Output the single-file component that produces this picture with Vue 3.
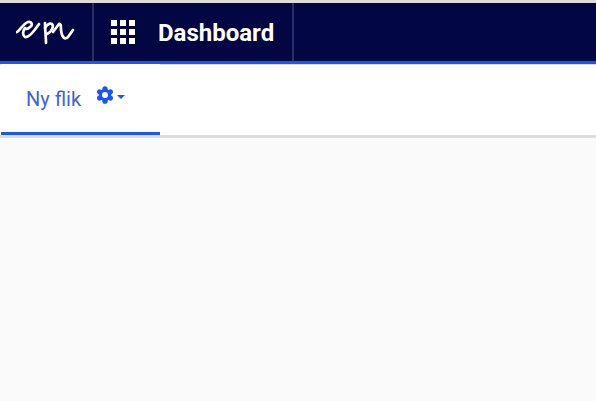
<script setup>
const dots = Array.from({ length: 9 })
const lobes = [0, 60, 120, 180, 240, 300]
</script>

<template>
  <div class="page">
    <header class="topbar">
      <a class="logo">
        <svg width="60" height="26" viewBox="17 22 60 26" fill="none" stroke="#fff" stroke-width="2.7" stroke-linecap="round" stroke-linejoin="round">
          <path d="M18 35 C21 33 25 26 29 25 C33 24 34 28 31 30 C29 32 27 32 26 31 C24 34 23 38 26 40 C30 41 36 33 40 27" />
          <path d="M46 26 C46 33 47 40 47 46" />
          <path d="M46 31 C48 28 51 26 53 27 C55 29 53 35 48 37" />
          <path d="M54 35 L60 27 C62 26 62 30 62 33 C63 41 66 43 69 40 L74 33" />
        </svg>
      </a>
      <div class="apps">
        <div class="grid">
          <span v-for="(d, i) in dots" :key="i" class="dot"></span>
        </div>
        <span class="title">Dashboard</span>
      </div>
    </header>
    <nav class="tabs">
      <div class="tab">
        <span class="tab-name">Ny flik</span>
        <svg class="gear" width="18" height="18" viewBox="0 0 18 18">
          <circle cx="9" cy="9" r="6.2" fill="#1a56f0" />
          <circle
            v-for="a in lobes"
            :key="a"
            cx="9"
            cy="2.8"
            r="2.6"
            fill="#1a56f0"
            :transform="`rotate(${a} 9 9)`"
          />
          <circle cx="9" cy="9" r="3" fill="#fff" />
        </svg>
        <span class="caret"></span>
      </div>
    </nav>
    <main class="content"></main>
  </div>
</template>

<style>
html, body {
  margin: 0;
  background: #fafafa;
}
</style>

<style scoped>
.page {
  height: 401px;
  display: flex;
  flex-direction: column;
  font-family: Roboto, "Liberation Sans", sans-serif;
  background: #fafafa;
  overflow: hidden;
}

.topbar {
  height: 58px;
  margin-top: 3px;
  box-shadow: 0 -3px 0 #dddddd;
  background: #020642;
  border-bottom: 3px solid #1a56f0;
  display: flex;
  flex-shrink: 0;
}

.logo {
  width: 94px;
  border-right: 2px solid #2a2d63;
  display: flex;
  align-items: center;
  justify-content: center;
  box-sizing: border-box;
}

.apps {
  display: flex;
  align-items: center;
  gap: 20px;
  padding: 0 18px 0 17px;
  border-right: 2px solid #2a2d63;
}

.grid {
  display: grid;
  grid-template-columns: repeat(3, 6px);
  grid-auto-rows: 6px;
  gap: 3px;
}

.dot {
  background: #fff;
}

.title {
  color: #fff;
  font-weight: 700;
  font-size: 24px;
  margin: 2px 0 0 3px;
}

.tabs {
  height: 70px;
  background: #fff;
  border-top: 1px solid #dddddd;
  border-bottom: 3px solid #dddddd;
  display: flex;
  flex-shrink: 0;
}

.tab {
  width: 159px;
  height: 71px;
  margin: -1px 0 0 1px;
  box-sizing: border-box;
  background: #fff;
  border-bottom: 3px solid #1a56f0;
  display: flex;
  align-items: flex-start;
  padding: 23px 0 0 25px;
}

.tab-name {
  color: #3d63dd;
  font-size: 20px;
  line-height: 24px;
}

.gear {
  margin-left: 15px;
  margin-top: -1px;
}

.caret {
  width: 0;
  height: 0;
  margin: 8px 0 0 3px;
  border-left: 4px solid transparent;
  border-right: 4px solid transparent;
  border-top: 4px solid #1a56f0;
}

.content {
  flex: 1;
}
</style>
